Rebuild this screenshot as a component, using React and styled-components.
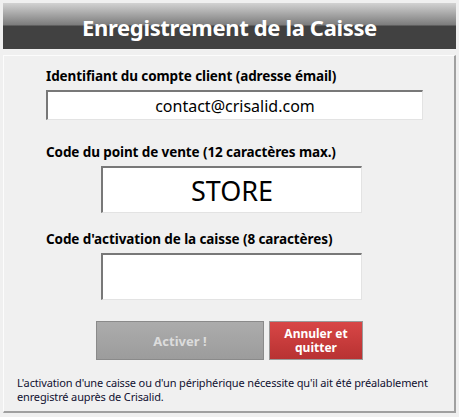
import React from 'react'
import styled, { createGlobalStyle } from 'styled-components'

const GlobalStyle = createGlobalStyle`
	html, body {
		margin: 0;
		padding: 0;
		background: #f0f0f0;
	}
	body {
		font-family: "Noto Sans", "Open Sans", sans-serif;
	}
`

const Window = styled.div`
	width: 459px;
	height: 417px;
	box-sizing: border-box;
	padding: 3px 3px 4px 3px;
	display: flex;
	flex-direction: column;
	gap: 6px;
`

const Header = styled.div`
	height: 46px;
	display: flex;
	align-items: center;
	justify-content: center;
	background: linear-gradient(to bottom, #d2d2d2 0px, #7c7c7c 22px, #414141 23px, #414141 100%);
`

const Title = styled.h1`
	margin: 0;
	padding-top: 2px;
	font-size: 22px;
	font-weight: 700;
	color: #fff;
	letter-spacing: -0.35px;
`

const Panel = styled.div`
	flex: 1;
	box-sizing: border-box;
	border-top: 1px solid #fcfcfc;
	border-left: 1px solid #fcfcfc;
	border-right: 2px solid #a0a0a0;
	border-bottom: 2px solid #a0a0a0;
	padding: 11px 0 0 42px;
	display: flex;
	flex-direction: column;
`

const Field = styled.div`
	display: flex;
	flex-direction: column;
	gap: 4px;
	margin-bottom: ${({ $space }) => $space}px;
`

const Label = styled.label`
	font-size: 13.5px;
	font-weight: 700;
	color: #000;
	line-height: 19px;
	letter-spacing: -0.1px;
`

const Input = styled.div`
	box-sizing: border-box;
	width: ${({ $w }) => $w}px;
	height: ${({ $h }) => $h}px;
	margin-left: ${({ $indent }) => $indent}px;
	background: #fff;
	border-top: 2px solid #787878;
	border-left: 2px solid #787878;
	border-right: 1px solid #e3e3e3;
	border-bottom: 1px solid #e3e3e3;
	display: flex;
	align-items: center;
	justify-content: center;
	font-size: ${({ $fs }) => $fs}px;
	color: #000;
`

const Buttons = styled.div`
	display: flex;
	gap: 5px;
	margin-left: 50px;
`

const Button = styled.button`
	box-sizing: border-box;
	width: ${({ $w }) => $w}px;
	height: 39px;
	font-family: inherit;
	font-weight: 700;
	font-size: ${({ $danger }) => ($danger ? 12 : 13)}px;
	line-height: 14px;
	padding: 0 4px;
	border: 1px solid ${({ $danger }) => ($danger ? '#9a9a9a' : '#8a8a8a')};
	color: ${({ $danger }) => ($danger ? '#fff' : '#dcdcdc')};
	background: ${({ $danger }) =>
		$danger
			? 'linear-gradient(to bottom, #d84646, #b83232)'
			: 'linear-gradient(to bottom, #acacac, #9c9c9c)'};
`

const Note = styled.p`
	margin: 16px 0 0 -29px;
	font-size: 11px;
	line-height: 14px;
	letter-spacing: -0.15px;
	color: #101030;
	width: 425px;
`

const App = () => (
	<>
		<GlobalStyle />
		<Window>
			<Header>
				<Title>Enregistrement de la Caisse</Title>
			</Header>
			<Panel>
				<Field $space={23}>
					<Label>Identifiant du compte client (adresse émail)</Label>
					<Input $w={377} $h={30} $indent={0} $fs={16}>contact@crisalid.com</Input>
				</Field>
				<Field $space={17}>
					<Label>Code du point de vente (12 caractères max.)</Label>
					<Input $w={261} $h={47} $indent={55} $fs={27}>STORE</Input>
				</Field>
				<Field $space={21}>
					<Label>Code d'activation de la caisse (8 caractères)</Label>
					<Input $w={261} $h={47} $indent={55} $fs={16} />
				</Field>
				<Buttons>
					<Button $w={168}>Activer !</Button>
					<Button $w={94} $danger>Annuler et quitter</Button>
				</Buttons>
				<Note>
					L'activation d'une caisse ou d'un périphérique nécessite qu'il ait été préalablement enregistré auprès de Crisalid.
				</Note>
			</Panel>
		</Window>
	</>
)

export default App
